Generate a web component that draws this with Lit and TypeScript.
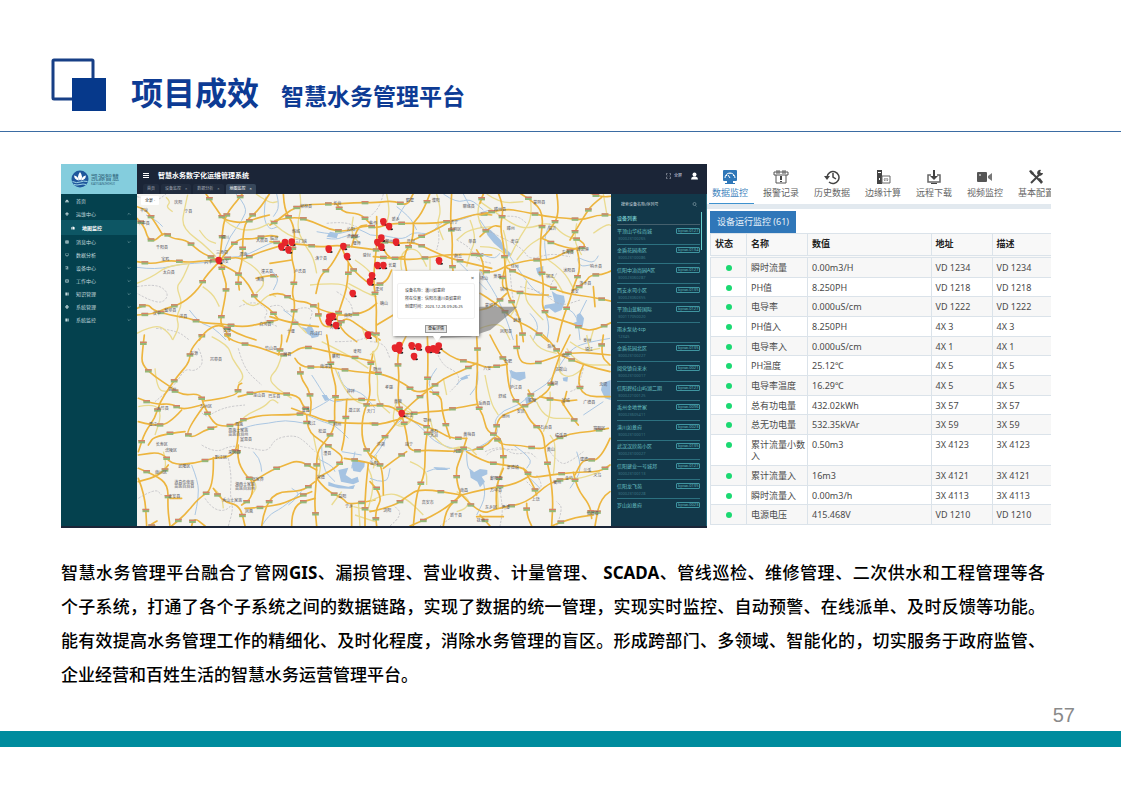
import { LitElement, html, svg, css } from "lit";
import { customElement } from "lit/decorators.js";

const CJK = css`"Noto Sans", "Noto Sans CJK SC", sans-serif`;

interface Tile {
  x: number;
  y: number;
  roads: string[];
  minor: string[];
  rivers: string[];
  lakes: string[];
  borders: string[];
  towns: [number, number, string][];
}

const tiles: Tile[] = [
  {
    x: -243, y: -102,
    roads: [
      "243,175 265,198 275,235 295,245 325,215 345,235 390,240 420,265 440,280 490,302",
      "490,305 497,250 500,210 505,180 520,150 545,120 560,100",
      "490,305 455,300 400,308 340,300 290,312 243,305",
      "490,305 520,265 550,235 590,238 640,225 665,230",
      "490,300 540,290 560,300 600,280 665,260",
      "490,310 530,330 565,355 590,395 600,420 640,445 665,475",
      "495,310 500,340 512,370 508,410 500,450 492,490 510,510 520,540",
      "485,310 450,345 430,385 380,430 330,445 290,462 243,465",
      "243,445 275,430 290,450 340,465 400,475 440,490 490,490 560,502 620,490 665,480",
      "640,102 610,150 570,180 560,230 560,300 545,350 550,390",
      "450,102 470,130 490,160 505,180 560,190 600,175 640,165",
      "320,225 300,190 270,150 243,140",
      "430,540 445,515 490,490 540,520 600,540", "600,355 640,345 665,350",
    ],
    minor: [
      "395,104 385,150 378,190 400,222 440,250 480,290", "330,112 345,125 330,140 350,155",
      "400,310 380,360 360,380 380,430 360,470 370,500 350,540", "440,380 470,400 490,440",
      "430,210 450,240 480,250", "560,300 600,320 630,370 600,400", "243,370 290,350 330,320 400,310",
      "560,420 590,450 640,400 660,410", "505,180 540,210 600,210 640,190", "243,520 300,490 340,520 350,540",
      "600,102 640,130 665,125",
    ],
    rivers: [
      "243,322 300,330 380,310 450,310 500,290 560,292 640,250 665,245", "540,102 575,140 560,180 520,230 500,290",
      "630,110 620,170 640,210 665,200", "400,450 430,490 470,500 510,540", "270,165 300,180 320,200",
    ],
    lakes: [],
    borders: [
      "243,110 300,125 330,102", "243,380 300,370 340,400 320,430 280,420 243,400", "550,440 590,420 640,450 620,480 665,500",
      "300,505 360,510 400,540",
    ],
    towns: [
      [355, 132, "庆阳"], [385, 160, "宁县"], [252, 155, "平凉"], [495, 236, "铜川"], [600, 246, "大荔县"],
      [245, 195, "华亭县"], [300, 268, "千阳县"], [316, 304, "宝鸡"], [445, 312, "兴平"], [494, 308, "西安"],
      [320, 342, "太白县"], [550, 288, "渭南"], [600, 364, "洛南"], [615, 338, "潼关县"], [325, 455, "留坝县"],
      [290, 466, "汉中"], [370, 474, "洋县"], [500, 515, "安康"], [610, 498, "白河县"], [480, 282, "三原县"],
    ],
  },
  {
    x: 399, y: -102,
    roads: [
      "0,195 25,180 60,150 100,135 150,132 200,132 250,128 320,128 370,122 412,138 430,100",
      "40,100 42,150 70,190 75,240 62,290 78,340 65,400 75,425 70,480 50,545",
      "0,245 40,250 100,253 150,262 200,255 260,262 320,270",
      "15,182 70,168 130,185 180,210 230,215 290,195 320,205 360,190 430,190 500,190 560,180 620,160 665,165",
      "200,132 215,158 270,160 300,190",
      "320,170 322,240 315,300 310,370 320,430 318,500 320,545",
      "320,240 370,252 430,245 480,270 540,295 600,310 665,325",
      "215,260 232,310 270,350 310,380 350,365 365,330",
      "310,290 370,295 430,300 500,288 560,282 665,285",
      "430,190 432,240 400,280 410,335", "480,100 462,150 430,190", "545,100 540,180 548,240 545,300 550,340",
      "430,240 480,218 540,185", "330,240 350,300 400,290", "235,310 235,370 212,440 200,475",
      "0,405 30,395 75,425 110,425 150,450 225,470 290,455 320,430", "145,430 145,500 200,500 228,470 270,500 330,540",
      "0,470 50,485 100,495 145,500", "200,475 212,510 260,545", "215,260 185,320 150,345 138,400",
      "620,270 640,300 640,345", "320,495 370,465", "245,260 260,200 290,195", "0,310 65,300",
    ],
    minor: [
      "90,102 95,140 80,200 100,250 130,290 140,340", "0,180 40,220 100,240", "120,375 180,370 230,375 250,400",
      "350,102 360,150 350,190", "255,300 300,330 310,360", "250,170 240,220 270,250", "395,330 385,280 440,260 470,320",
      "480,290 480,330", "600,180 620,230 600,280 590,320", "640,102 620,140 630,200 665,230", "500,102 515,150 500,190 520,240",
      "235,370 290,400 320,410", "70,480 110,520", "275,500 290,540", "665,200 600,205 560,240",
    ],
    rivers: [
      "140,215 190,225 230,215 270,205 300,228 340,225 400,240 430,215 480,225 520,180 560,185 610,165 660,150",
      "380,140 420,170 440,210", "520,102 560,130 600,115 640,150", "170,235 200,240 230,225 270,230", "0,330 30,350 10,390",
      "40,450 70,470 90,500", "580,102 600,140", "20,102 30,140 10,170", "570,310 610,350 650,390", "430,102 400,140 380,180",
    ],
    lakes: ["90,500 110,505 120,490 132,512 125,530 110,520 105,510", "120,520 150,515 145,530 125,535", "180,215 205,220 200,235 170,230"],
    borders: [
      "0,440 30,430 50,460 100,440 130,450 120,480", "170,190 220,185 260,200", "560,240 600,260 620,300 665,310",
      "340,102 330,140 300,170", "500,190 510,230 500,270", "200,395 240,420 250,460",
    ],
    towns: [
      [90, 143, "柳林县"], [190, 134, "长治"], [66, 218, "韩城"], [75, 250, "三门峡"], [230, 233, "济源区"], [248, 256, "偃师"],
      [135, 300, "洛宁县"], [72, 340, "卢氏县"], [355, 320, "长葛"], [365, 184, "新乡"], [408, 127, "鹤壁"], [298, 194, "焦作"],
      [410, 249, "开封"], [538, 214, "东明区"], [552, 295, "商丘"], [595, 248, "单县"], [578, 145, "聊城县"], [278, 291, "登封"],
      [315, 393, "漯河"], [330, 436, "确山"], [222, 472, "南阳"], [180, 507, "邓州"], [50, 518, "十堰"], [120, 526, "丹江口"],
      [485, 125, "濮阳"], [345, 250, "郑州"], [0, 240, "临汾"], [540, 192, "济宁"], [230, 213, "沁阳"],
    ],
  },
  {
    x: 1029, y: -102,
    roads: [
      "0,165 70,145 130,155 200,170 260,175 310,180 350,165 400,165", "55,100 72,140 60,200 72,260 75,320 80,400 110,450 125,500 130,545",
      "120,100 170,130 190,170 182,230 180,300 192,380 185,440 205,470", "230,100 240,160 210,210 185,235",
      "330,100 365,112 400,108", "365,112 335,135 315,165 300,190 270,240",
      "75,320 120,345 190,370 250,400 330,410 400,425", "75,320 40,340 0,330", "75,325 60,380 90,390 150,405 205,405",
      "75,320 130,300 210,300 250,280 290,265", "185,235 240,260 295,268 318,258 300,240 280,235",
      "290,265 305,320 280,380 270,420 250,470 232,545", "280,390 315,370 330,345 365,345 400,330", "0,400 50,430 100,480 150,500 205,545",
      "80,400 40,440 0,450", "205,470 280,490 310,510 345,510 400,485", "0,230 35,195 62,200", "340,380 345,440", "10,102 0,130",
    ],
    minor: [
      "0,125 50,160 110,200 150,205 210,185 250,225 280,235", "20,102 60,130 130,125", "150,110 160,170 120,230 90,290",
      "0,260 60,260 90,310", "110,300 140,260 180,235", "140,360 130,410 160,450 190,480", "205,300 250,330 280,385", "340,220 380,190 400,200",
      "120,400 110,440 90,470", "290,190 280,240 305,285", "340,510 330,545", "0,505 60,480 90,540", "70,210 85,260 75,320",
      "250,400 225,350 190,340", "370,102 380,160",
    ],
    rivers: [
      "20,210 0,180", "90,290 110,320 130,350 170,400 215,410", "0,330 40,390 70,450 100,540", "355,287 345,310 310,300 290,290 300,320 330,315",
      "210,190 190,230 200,300", "190,440 210,490 200,540", "245,440 290,450 300,540", "0,280 40,300 60,280", "320,420 300,460",
      "150,460 180,490 160,540",
    ],
    lakes: [
      "15,203 32,210 62,240 72,262 95,283 86,290 68,272 42,250 22,225", "215,393 230,403 252,407 255,425 245,450 225,458 208,445 190,447 195,435 225,430",
      "168,325 190,318 190,342 180,350 172,340", "290,465 300,458 312,475 308,500 292,505 278,490 290,485",
    ],
    borders: [
      "0,200 60,230 100,250 130,270 150,300 210,280 270,290", "90,330 95,400 110,470", "230,340 210,380", "60,170 110,165 140,190",
      "120,380 180,390 240,440 300,420",
    ],
    towns: [
      [160, 133, "蒙阴县"], [42, 152, "滕州县"], [80, 210, "滕州"], [92, 248, "枣庄"], [205, 211, "临沂"], [92, 324, "徐州"],
      [245, 282, "东海县"], [290, 272, "连云港"], [330, 324, "响水县"], [250, 335, "沭阳县"], [298, 376, "涟水县"],
      [60, 394, "宿州"], [272, 398, "淮安"], [198, 353, "宿迁"], [100, 485, "蚌埠"], [0, 360, "砀山"], [60, 520, "凤阳县"],
      [40, 355, "萧县"], [15, 440, "蒙城县"],
    ],
  },
  {
    x: -6, y: 423,
    roads: [
      "28,0 22,50 20,90 60,125 105,155", "205,0 165,40 165,80 130,120 105,155 75,200 60,250 30,290 10,350",
      "105,155 135,182 195,175 205,205", "205,198 310,185 308,150 320,145", "310,185 380,165 420,175 490,180 505,215 520,225",
      "270,0 290,20 370,35 430,60 462,60 500,35 540,40 600,55 720,80", "430,60 440,30 440,0", "480,70 495,98 560,95 600,100 660,110 720,115",
      "495,98 497,130 520,160 530,200 525,240", "575,0 585,60 590,110 605,160 598,210 600,280 570,320 545,350 545,430 538,500 545,573",
      "10,190 60,210 110,205 140,225 200,210", "140,225 100,270 50,270 10,260", "205,205 230,265 270,275 300,268",
      "205,215 150,290 170,310 210,285 245,275", "300,268 350,240 470,240 520,235 560,255 620,265 720,265",
      "310,265 310,330 290,365 240,368 180,385 110,390 80,350 10,360", "310,330 305,370 330,420 355,440 350,490 320,510",
      "235,368 237,460 190,490 150,540 110,573", "515,240 515,285 560,320 600,345 628,370 600,400 545,430",
      "355,440 400,410 450,390 490,375 545,405", "10,400 60,420 100,450 98,520 105,573", "10,430 30,480 35,573",
      "628,370 690,380 720,390", "700,385 690,470 690,573", "715,50 700,120 708,180 682,240 680,320 710,370",
      "600,195 640,192 720,195", "635,195 630,300 620,345", "545,430 570,465 625,490 640,510 720,495", "330,520 420,515 480,490 530,470",
      "380,573 385,530 420,470 500,470 540,440", "235,460 260,500 315,510 330,573", "470,573 470,510 540,490", "60,573 40,573 66,558",
      "650,510 650,573", "150,290 60,300 40,330", "105,490 140,490", "170,573 175,545 210,573", "470,220 510,235", "100,390 80,420 10,440",
    ],
    minor: [
      "230,5 280,30 290,70 320,110 325,130 310,145", "440,60 430,100 400,130 425,160 470,190", "60,100 65,165 100,170",
      "310,265 330,240 390,215 410,190 430,205", "560,20 640,60 700,100", "600,100 620,150 660,200 700,210", "10,215 60,205 80,240 60,300",
      "655,515 720,530", "660,540 720,560", "670,500 675,573", "85,350 100,400 60,420", "235,460 260,480 265,520", "545,350 560,380 550,430",
      "535,300 545,350", "700,400 720,440 700,520", "620,470 590,510", "345,425 370,450 350,480",
    ],
    rivers: [
      "310,285 350,270 400,265 450,255 510,265", "530,120 550,150 570,185 600,205 640,190", "520,230 560,210 590,190", "355,350 375,370 380,410",
      "170,390 190,440 190,490 180,540", "560,330 560,400 600,440", "545,370 590,390 600,410", "610,110 620,160 680,170 720,220",
      "380,573 400,540 440,520 500,470", "515,240 560,260 600,270 640,310", "660,350 650,400", "460,510 500,480 470,460", "620,350 680,360",
    ],
    lakes: [
      "655,375 690,378 688,395 676,412 655,408 650,392", "610,405 640,398 632,420 650,432 668,425 672,440 655,448 618,440", "580,440 600,448 640,455 660,450 655,462 610,460 580,452",
      "560,180 575,180 582,195 570,198",
    ],
    borders: [
      "190,40 210,80 180,110 150,100 120,150 60,200", "310,40 325,100 380,150", "195,225 210,250 240,230 280,215 330,210", "200,330 240,355 290,330 350,340 400,350 420,310 480,300 510,320 540,350",
      "280,370 290,420 285,480 295,520 280,573", "210,490 230,520 270,530 300,500", "10,490 60,460 80,480", "600,20 660,20 700,5",
    ],
    towns: [
      [225, 79, "岚皋县"], [165, 60, "万源"], [100, 168, "达州"], [195, 218, "万州区"], [355, 187, "巫山县"], [400, 190, "巴东县"],
      [390, 45, "竹山县"], [445, 64, "房县"], [590, 70, "襄阳"], [655, 55, "枣阳"], [555, 99, "南漳县"], [635, 173, "钟祥"],
      [500, 232, "宜昌"], [518, 271, "枝江"], [300, 272, "恩施"], [280, 290, "恩施土家族"], [280, 304, "苗族自治州"], [315, 318, "宣恩县"],
      [595, 274, "荆州"], [550, 295, "松滋"], [640, 230, "潜江区"], [695, 235, "天门"], [280, 356, "来凤县"], [240, 372, "黔江区"],
      [565, 360, "澧县"], [130, 398, "武隆区"], [90, 352, "涪陵区"], [60, 416, "南川区"], [118, 446, "道真仡佬族"], [118, 460, "苗族自治县"],
      [300, 452, "湘西土家族"], [300, 466, "苗族自治州"], [350, 438, "张家界"], [545, 433, "常德"], [262, 500, "秀山土家族"], [100, 490, "正安县"],
      [610, 488, "益阳"], [630, 520, "宁乡"], [330, 535, "凤凰"], [62, 333, "长寿区"], [65, 225, "大竹县"], [42, 274, "垫江"],
    ],
  },
  {
    x: 699, y: 423,
    roads: [
      "95,240 82,200 88,120 80,60 110,0", "172,0 175,90 170,170 178,260 165,330 165,420 140,470 130,573", "0,110 50,120 110,150 130,170 170,170 220,130 270,110 320,85",
      "200,30 240,70 320,85 350,100 410,88", "320,0 325,85 315,200 340,240 350,290 390,305 400,340 400,390", "360,0 385,50 412,88",
      "440,0 440,75 480,90 530,75 570,60", "410,88 415,180 460,215 480,260 520,290 525,350 540,420", "570,60 620,50 720,60", "570,60 600,0",
      "570,60 640,90 720,110", "570,60 545,130 540,165 490,200 440,225 385,245 375,300", "570,60 550,30 520,0", "640,90 620,130 640,185 720,185",
      "0,212 60,208 95,240 170,230 215,228 280,215 320,208", "95,240 60,290 30,320 0,360", "95,240 110,290 115,350 170,345 260,350 275,345",
      "95,240 140,265 200,285 240,310 290,310", "180,170 215,180 215,228 240,310", "95,250 30,270 0,265", "290,310 272,370 258,400 262,450 275,480 230,520 220,573",
      "290,350 340,380 400,390 470,400 478,430 540,420 610,412 690,410 720,390", "310,345 350,335 375,300 390,330 450,330 520,345 540,320 600,295 660,290 715,280",
      "275,480 350,460 430,450 475,425", "275,480 330,540 380,520 470,505 540,440 600,430", "380,520 375,460 400,400", "0,440 40,480 15,530 20,573",
      "0,530 70,515 110,485 150,460 275,480", "120,573 200,540 275,480", "540,420 550,480 545,573", "610,412 620,460 660,510 665,550", "720,470 690,490 675,573",
      "545,573 600,550 670,540", "575,200 600,240 625,270", "510,185 570,200 620,195", "40,480 40,410 20,370 0,360", "470,505 470,540 485,573",
      "720,310 690,380 640,370 615,420", "475,165 490,195", "90,240 130,200 170,170", "110,350 80,370 40,400", "460,400 490,450 500,480", "700,0 690,60 720,90",
      "320,545 400,545", "360,573 330,540", "590,170 580,210",
    ],
    minor: [
      "10,50 25,120 20,200 60,235", "0,60 30,40 20,0", "480,0 500,40 560,55", "540,170 545,230 520,290", "345,120 360,200 385,240", "250,340 290,330 320,360",
      "120,380 170,400 170,450", "600,20 640,50 690,40", "570,70 560,110 600,130 640,100", "80,200 60,260 100,280 140,240 90,200",
      "180,290 220,340 270,340", "20,360 10,400", "550,420 560,330 540,300", "0,500 50,470 110,490 160,540", "260,470 300,490 290,520 260,530",
      "80,230 120,220 125,260 85,268", "400,390 380,440 385,520", "650,0 660,50", "690,410 640,430 600,430", "500,200 520,250 600,250", "180,250 190,290",
      "220,130 230,180", "590,40 620,90 720,90",
    ],
    rivers: [
      "100,250 60,280 40,330 0,380", "100,240 150,270 190,320 260,345 300,350 350,325 388,292 370,260 400,225 450,210 490,170 530,150 560,105 600,45 640,25 720,10",
      "290,355 290,400 310,410", "320,90 330,140 300,180", "200,100 170,140 190,170", "0,430 50,450 60,400", "170,410 190,400 240,400", "430,330 490,370 470,400",
      "420,160 425,105", "620,350 640,400 600,460", "340,440 350,480 320,540", "640,240 700,200", "260,150 280,125 300,120", "480,430 510,460",
    ],
    lakes: [
      "418,105 438,112 465,110 467,130 448,138 425,128", "298,400 312,412 330,402 352,405 352,418 335,425 345,440 330,457 322,440 302,428", "697,145 722,135 722,195 705,190 693,165",
      "578,128 594,125 592,140 580,138", "190,396 225,398 235,405 200,405", "465,190 480,180 485,205 470,212", "270,130 290,120 295,130 275,136",
    ],
    borders: [
      "200,50 215,90 260,110 270,140 240,170", "345,350 390,330 430,360 480,350 500,370", "540,350 570,390 600,380 640,350", "500,420 520,450 500,470 470,440", "60,573 100,540 70,510",
      "390,470 400,520 390,573", "560,573 580,520 560,500", "640,100 625,160 600,170", "240,550 210,573", "0,20 40,20 60,70", "350,360 370,340 440,345",
    ],
    towns: [
      [402, 84, "合肥"], [340, 104, "六安"], [420, 162, "庐江县"], [575, 66, "南京"], [532, 40, "滁州"], [555, 108, "马鞍山"], [640, 22, "泰州"],
      [645, 48, "镇江"], [688, 153, "无锡"], [540, 150, "芜湖"], [475, 200, "铜陵"], [575, 200, "宣城"], [325, 210, "岳西县"], [280, 304, "黄梅县"],
      [105, 245, "武汉"], [160, 260, "鄂州"], [180, 293, "黄石"], [180, 306, "大冶"], [105, 333, "咸宁"], [250, 355, "九江"], [510, 282, "石台县"],
      [555, 305, "绩溪县"], [530, 348, "黄山"], [410, 403, "景德镇"], [360, 435, "鄱阳县"], [360, 470, "万年县"], [270, 472, "南昌"], [155, 506, "高安市"],
      [395, 522, "鹰潭"], [485, 498, "上饶"], [550, 446, "衢州"], [630, 378, "建德"], [640, 410, "兰溪"], [585, 436, "金华"], [670, 426, "义乌"],
      [650, 540, "仙居县"], [240, 545, "新干县"], [320, 560, "抚州"], [45, 162, "孝感"], [10, 108, "随州"], [72, 203, "黄陂"], [395, 250, "池州"],
      [440, 234, "安庆"], [385, 190, "舒城"], [640, 206, "广德县"], [670, 285, "富阳区"], [0, 390, "岳阳"], [20, 333, "洪湖"], [40, 530, "浏阳"], [345, 522, "东乡区"],
    ],
  },
];

const pins: [number, number][] = [
  [739, 84], [756, 98], [733, 133], [721, 146], [733, 160], [777, 145], [619, 158], [630, 188], [575, 166],
  [444, 146], [464, 145], [433, 159], [454, 168], [906, 201], [721, 215], [739, 215], [705, 246], [699, 264],
  [647, 299], [577, 370], [587, 368], [575, 384], [597, 395], [693, 424], [245, 200], [774, 463], [787, 455],
  [787, 468], [824, 456], [844, 459], [831, 488], [874, 467], [889, 465], [905, 457], [899, 468], [794, 659],
];

const parse = (line: string) => line.split(" ").map((p) => p.split(",").map(Number));

function curve(line: string): string {
  const p = parse(line);
  let d = `M${p[0][0]} ${p[0][1]}`;
  for (let i = 1; i < p.length - 1; i++) {
    const mx = (p[i][0] + p[i + 1][0]) / 2;
    const my = (p[i][1] + p[i + 1][1]) / 2;
    d += `Q${p[i][0]} ${p[i][1]} ${mx} ${my}`;
  }
  const e = p[p.length - 1];
  return d + `L${e[0]} ${e[1]}`;
}

const shields = (line: string, n: number) =>
  parse(line).slice(1).map((b, i, a) => {
    const prev = i ? a[i - 1] : parse(line)[0];
    return [(b[0] + prev[0]) / 2, (b[1] + prev[1]) / 2];
  }).filter((_, i) => (i + n) % 2 === 0);

@customElement("region-map")
class RegionMap extends LitElement {
  static styles = css`
    :host { display: block; position: relative; overflow: hidden; background: #f4f3ef; font-family: ${CJK}; }
    .chart { position: absolute; inset: 0; width: 100%; height: 100%; display: block; }
    .road { fill: none; stroke: #edb53e; stroke-width: 5; stroke-linejoin: round; stroke-linecap: round; }
    .minor { fill: none; stroke: #eadb90; stroke-width: 4; stroke-linejoin: round; }
    .river { fill: none; stroke: #abc7e3; stroke-width: 3; stroke-linejoin: round; }
    .lake { fill: #a5c3e2; }
    .border { fill: none; stroke: #b4b4ba; stroke-width: 2; stroke-dasharray: 7 4; }
    .shield { fill: #94b878; }
    .cap { fill: #d98068; }
    .town { font-size: 12px; fill: #55555c; }
    .pin { fill: #e6252b; }
    .dot { fill: #222; }
    .cast { fill: #6e6e6e; opacity: .6; }
    .scope { position: absolute; left: 4px; top: 2px; padding: 0 4px; height: 9px; border: 0; background: #fff; color: #222; font: 4px/9px ${CJK}; border-radius: 1px; }
    .card { position: absolute; left: 54%; top: 23.3%; width: 86px; background: #fff; box-shadow: 1px 1px 3px #777; padding: 4px 4px 3px; box-sizing: border-box; text-align: center; font: 4px/8px ${CJK}; color: #333; }
    .card::after { content: ""; position: absolute; left: 40px; top: 100%; border: 4px solid transparent; border-top: 6px solid #fff; border-bottom: 0; }
    .shut { display: block; margin-left: auto; border: 0; background: none; padding: 0; width: 5px; height: 6px; font: 6px/4px ${CJK}; color: #555; }
    .facts { margin: 2px 0 6px; padding: 3px 7px 7px; border: 1px solid #f1f1f1; border-radius: 2px; text-align: left; white-space: nowrap; }
    .fact { margin: 0; }
    .more { display: block; margin: 0 auto; border: 1px solid #999; background: #e4e4e4; color: #222; padding: 0 2px; font: 4px/6px ${CJK}; }
  `;

  render() {
    return html`
      <svg class="chart" viewBox="0 0 1422 996" preserveAspectRatio="xMidYMid slice" aria-label="地图">
        ${tiles.map((t) => svg`<g transform="translate(${t.x} ${t.y})">
          ${t.lakes.map((l) => svg`<polygon class="lake" points=${l}></polygon>`)}
          ${t.rivers.map((l) => svg`<path class="river" d=${curve(l)}></path>`)}
          ${t.borders.map((l) => svg`<path class="border" d=${curve(l)}></path>`)}
          ${t.minor.map((l) => svg`<path class="minor" d=${curve(l)}></path>`)}
          ${t.roads.map((l) => svg`<path class="road" d=${curve(l)}></path>`)}
          ${t.roads.map((l, n) => shields(l, n).map(([x, y]) => svg`
            <rect class="shield" x=${x - 10} y=${y - 5} width="20" height="10"></rect>
            <rect class="cap" x=${x - 10} y=${y - 5} width="20" height="4"></rect>`))}
          ${t.towns.map(([x, y, name]) => svg`<text class="town" x=${x} y=${y}>${name}</text>`)}
        </g>`)}
        <polygon class="cast" points="1029,338 1141,338 1115,362 1060,408 1000,428 900,432"></polygon>
        ${pins.map(([x, y]) => svg`<g>
          <ellipse class="dot" cx=${x + 7} cy=${y + 8} rx="5" ry="3"></ellipse>
          <path class="pin" d="M${x - 10} ${y - 2}a10 10 0 0 1 20 0q0 8 -6 13h-7q-7 -5 -7 -13z"></path></g>`)}
      </svg>
      <button class="scope">全景 ·</button>
      <div class="card">
        <button class="shut" aria-label="关闭">×</button>
        <div class="facts">
          <p class="fact">设备名称：潢川如意府</p>
          <p class="fact">所在位置：信阳市潢川县如意府</p>
          <p class="fact">创建时间：2023-12-26 09:26:25</p>
        </div>
        <button class="more">查看详情</button>
      </div>`;
  }
}

const menu: [string, string, string][] = [
  ["M1 5l4-4 4 4v4H6V6H4v3H1z", "首页", ""],
  ["M4 0h2v3l3 0v3H6v4H4V6H1V3h3z", "运维中心", "up"],
  ["M1 3l3-2v8H1zM5 1l4 2v6H5z", "地图监控", "sub"],
  ["M1 1h8v8H1zM4 3v4h2V3z", "消息中心", "down"],
  ["M1 1h8v5H1zM2 2v3h6V2zM3 8h4v1H3z", "数据分析", ""],
  ["M1 1h7v8H6V3H1zM2 5h2v4H2z", "设备中心", "down"],
  ["M1 1h8v8H1zM3 3v4h4V3z", "工作中心", "down"],
  ["M1 1h5v8H1zM7 1h2v8H7z", "知识管理", "down"],
  ["M4 0h2l1 2 2 1v3L7 8 5 10 3 8 1 6V3l2-1zM4 4v2h2V4z", "系统管理", "down"],
  ["M1 1h4v8H1zM6 1h3v8H6z", "系统监控", "down"],
];

const devices: [string, string, string][] = [
  ["平顶山华桂尚城", "300023100265", "bpsw-0127"], ["金盾花园南区", "300023100086", "bpsw-0134"],
  ["信阳中冶尚园A区", "300023060287", "bpsw-0127"], ["西安水司小区", "300023060355", "bpsw-0135"],
  ["平顶山蓝鲸国际", "300117050020", "bpsw-0127"], ["雨水泵站-tcp", "12345", ""],
  ["金盾花园北区", "300023100227", "bpsw-0135"], ["阅党镇自来水", "300023100017", "bpsw-0021"],
  ["信阳碧桂山屿湖二期", "300022100125", "bpsw-0127"], ["禹州金地世家", "300023605411", "bpsw-0096"],
  ["潢川如意府", "300023100011", "bpsw-0023"], ["武汉汉欣苑小区", "300023100027", "bpsw-0135"],
  ["信阳建业一号城邦", "300023100113", "bpsw-0127"], ["信阳龙飞苑", "300023100228", "bpsw-0135"],
  ["罗山如意府", "", "bpsw-0023"],
];

@customElement("water-dashboard")
class WaterDashboard extends LitElement {
  static styles = css`
    :host { display: grid; grid-template-columns: 76px minmax(0, 1fr); background: #1b2537; font-family: ${CJK}; overflow: hidden; }
    .side { background: #04414e; color: #c3dade; font-size: 5px; border-bottom: 2px solid #1b2537; }
    .brand { height: 30px; background: #84cddd; display: flex; align-items: center; gap: 2px; padding-left: 10px; box-sizing: border-box; color: #3b7189; }
    .brand-mark { width: 18px; height: 18px; }
    .brand-text { font-weight: 500; font-size: 7px; line-height: 9px; }
    .brand-sub { display: block; font-size: 3px; line-height: 4px; }
    .item { display: grid; grid-template-columns: 4px 1fr 5px; gap: 7px; height: 13px; align-items: center; padding: 0 5px 0 4px; color: inherit; text-decoration: none; }
    .item.sub { height: 15px; background: #0d5664; padding-left: 10px; color: #fff; font-weight: 700; }
    .glyph { width: 4px; height: 4px; fill: currentColor; }
    .chev { width: 4px; height: 4px; fill: none; stroke: #7ba4ab; stroke-width: 1; }
    .main { display: grid; grid-template-rows: 30px minmax(0, 1fr); padding-bottom: 2px; min-width: 0; }
    .top { display: grid; grid-template-rows: 20px 10px; color: #fff; }
    .bar { display: flex; align-items: center; padding: 3px 9px 0 6px; }
    .burger { width: 6px; height: 6px; margin-right: 9px; fill: #fff; }
    .name { margin: 0; font-size: 7px; line-height: 10px; font-weight: 700; flex: 1; }
    .full { border: 0; padding: 0; background: none; color: #d6dae0; display: flex; align-items: center; gap: 3px; font: 4px/6px ${CJK}; margin-right: 9px; }
    .corner { width: 5px; height: 6px; fill: none; stroke: currentColor; }
    .user { width: 7px; height: 8px; fill: #fff; }
    .tabs { display: flex; padding-left: 6px; gap: 2px; }
    .tab { border: 0; background: #222d3f; color: #a6adb8; font: 4px/10px ${CJK}; padding: 0 4px; border-radius: 2px 2px 0 0; white-space: nowrap; }
    .tab.on { background: #37475a; color: #fff; }
    .body { display: grid; grid-template-columns: minmax(0, 1fr) 96px; min-height: 0; }
    .devices { background: #12384a; padding: 4px 6px 7px 6px; border-right: 1px solid #24667a; display: flex; flex-direction: column; min-height: 0; position: relative; }
    .search { display: flex; align-items: center; height: 13px; padding: 0 3px 0 4px; }
    .box { flex: 1; min-width: 0; border: 0; padding: 0; background: none; color: #cdd9de; font: 4px/8px ${CJK}; height: 10px; }
    .box::placeholder { color: #cdd9de; opacity: 1; }
    .lens { width: 5px; height: 5px; fill: none; stroke: #a5bac3; }
    .head { margin: 0; height: 14px; font-size: 5px; line-height: 15px; font-weight: 500; color: #7cd0d2; border-bottom: 1px solid #45606d; box-sizing: border-box; }
    .list { list-style: none; margin: 0; padding: 0; flex: 1; display: grid; grid-auto-rows: minmax(0, 1fr); min-height: 0; }
    .device { display: grid; grid-template-columns: 1fr auto; align-content: center; align-items: center; border-bottom: 1px solid #2c7180; color: #6cc2c5; font-size: 5px; line-height: 8px; white-space: nowrap; }
    .device:last-child { border: 0; align-content: start; padding-top: 2px; }
    .code { grid-column: 1; font-size: 4px; line-height: 7px; color: #3e7683; padding-left: 1px; }
    .tag { border: 1px solid #3f95a0; border-radius: 1px; font: 4px/4px ${CJK}; padding: 0 1px; color: #64b9be; width: 20px; text-align: center; }
    .thumb { position: absolute; right: 4px; top: 18px; width: 1px; height: 38px; background: #6ad0cf; }
  `;

  render() {
    return html`
      <nav class="side">
        <div class="brand">
          <svg class="brand-mark" viewBox="0 0 36 36"><circle cx="18" cy="18" r="17" fill="#1f579c"></circle>
            <path d="M18 21Q10 14 18 4q8 10 0 17zM16 21Q7 20 6 11q8 1 10 10zM20 21q2-9 10-10-1 9-10 10z" fill="#fff"></path>
            <path d="M3 23q8 4 15 1t15-1M6 29q6 2 12 0t12 0" fill="none" stroke="#9cd4e6" stroke-width="2"></path></svg>
          <span class="brand-text">凯源智慧<span class="brand-sub">KAIYUANZHIHUI</span></span>
        </div>
        ${menu.map(([d, label, kind]) => html`<a class="item ${kind}" href="#">
          <svg class="glyph" viewBox="0 0 10 10"><path d=${d} fill-rule="evenodd"></path></svg><span>${label}</span>
          ${kind === "up" || kind === "down"
            ? html`<svg class="chev" viewBox="0 0 6 6"><path d=${kind === "up" ? "M1 4l2-2 2 2" : "M1 2l2 2 2-2"}></path></svg>` : ""}
        </a>`)}
      </nav>
      <div class="main">
        <header class="top">
          <div class="bar">
            <svg class="burger" viewBox="0 0 6 6"><path d="M0 0h6v1H0zM0 2h6v1H0zM0 4h6v1H0z"></path></svg>
            <h2 class="name">智慧水务数字化运维管理系统</h2>
            <button class="full"><svg class="corner" viewBox="0 0 10 12"><path d="M1 4V1h2M7 1h2v3M9 8v3H7M3 11H1V8M1 6h2M7 6h2"></path></svg>全屏</button>
            <svg class="user" viewBox="0 0 14 16"><circle cx="7" cy="5" r="4"></circle><path d="M0 15q0-5 5-6h4q5 1 5 6z"></path></svg>
          </div>
          <div class="tabs">
            <button class="tab">首页</button><button class="tab">设备监控　×</button>
            <button class="tab">数据分析　×</button><button class="tab on">地图监控　×</button>
          </div>
        </header>
        <div class="body">
          <region-map></region-map>
          <aside class="devices">
            <label class="search"><input class="box" placeholder="搜索设备名称/序列号" aria-label="搜索设备" />
              <svg class="lens" viewBox="0 0 10 10"><circle cx="5" cy="4" r="3"></circle><path d="M7 7l2 2"></path></svg></label>
            <h3 class="head">设备列表</h3>
            <ul class="list">
              ${devices.map(([name, code, tag]) => html`<li class="device"><span>${name}</span>
                ${tag ? html`<span class="tag">${tag}</span>` : html`<span></span>`}
                <span class="code">${code}</span></li>`)}
            </ul>
            <span class="thumb"></span>
          </aside>
        </div>
      </div>`;
  }
}

const tools = [
  { label: "数据监控", art: svg`<rect x="1" y="1" width="14" height="11" rx="1" fill="#2f77b8"></rect><path d="M3 9a5 5 0 0 1 10 0M8 9L6 6M4 6l1 1M12 6l-1 1M8 4v1" fill="none" stroke="#fff"></path><path d="M5 12h6v2h2v1H3v-1h2z" fill="#2f77b8"></path>` },
  { label: "报警记录", art: svg`<path d="M1 3h14v3H1zM3 6v8h10V6" fill="none" stroke="#555"></path><path d="M4 1v4M6 1v4M10 1v4M12 1v4" stroke="#555"></path><path d="M8 7v4M8 12v1" stroke="#444" stroke-width="2"></path>` },
  { label: "历史数据", art: svg`<path d="M3 8a6 6 0 1 1 2 5M9 4v4l3 2" fill="none" stroke="#444" stroke-width="1.5"></path><path d="M0 7h6l-3 4z" fill="#444"></path>` },
  { label: "边缘计算", art: svg`<path d="M2 1h5v14H2zM3 3v1h3V3zM4 9v2h1V9z" fill="#444" fill-rule="evenodd"></path><path d="M7 7h8v7H7z" fill="#fff" stroke="#666"></path><path d="M10 9l-1 2 1 1M12 9l1 2-1 1M11 9v3" fill="none" stroke="#666" stroke-width=".7"></path>` },
  { label: "远程下载", art: svg`<path d="M5 6H2v7h12V6h-3" fill="none" stroke="#666" stroke-width="1.5"></path><path d="M7 1h2v6h3l-4 4-4-4h3zM5 14h6v1H5z" fill="#444"></path>` },
  { label: "视频监控", art: svg`<rect x="0" y="3" width="10" height="10" rx="1" fill="#555"></rect><path d="M11 7l4-3v8l-4-3z" fill="#777"></path><path d="M2 6h2" stroke="#fff"></path>` },
  { label: "基本配置", art: svg`<path d="M4 4l9 9" stroke="#444" stroke-width="2"></path><path d="M12 5L3 14" stroke="#444" stroke-width="2"></path><path d="M1 2l2-1 3 3-1 2-2-1zM15 4a3 3 0 0 1-5 2 3 3 0 0 1 3-5l-1 2 1 1z" fill="#444"></path><path d="M10 10l2-1 3 4-2 2z" fill="#444"></path>` },
];

const readings: string[][] = [
  ["瞬时流量", "0.00m3/H", "VD 1234"], ["PH值", "8.250PH", "VD 1218"], ["电导率", "0.000uS/cm", "VD 1222"],
  ["PH值入", "8.250PH", "4X 3"], ["电导率入", "0.000uS/cm", "4X 1"], ["PH温度", "25.12℃", "4X 5"],
  ["电导率温度", "16.29℃", "4X 5"], ["总有功电量", "432.02kWh", "3X 57"], ["总无功电量", "532.35kVAr", "3X 59"],
  ["累计流量小数入", "0.50m3", "3X 4123"], ["累计流量入", "16m3", "3X 4121"], ["瞬时流量入", "0.00m3/h", "3X 4113"],
  ["电源电压", "415.468V", "VD 1210"],
];

@customElement("monitor-panel")
class MonitorPanel extends LitElement {
  static styles = css`
    :host { display: flex; flex-direction: column; overflow: hidden; background: #fff; font: 9px/11px ${CJK}; color: #4a4a4a; }
    .tools { display: flex; height: 40px; border-bottom: 5px solid #e2e9ef; padding-left: 2px; flex: none; }
    .tool { flex: none; width: 51px; border: 0; background: none; padding: 5px 9px 0 0; font: inherit; line-height: 13px; color: #666; display: flex; flex-direction: column; align-items: center; gap: 1px; box-sizing: border-box; white-space: nowrap; position: relative; }
    .tool.on { color: #3d83bd; }
    .tool.on::after { content: ""; position: absolute; left: 0; right: 6px; bottom: 0; height: 1px; background: #3e92cf; }
    .art { width: 16px; height: 16px; flex: none; }
    .gauge { position: absolute; right: 6px; top: 5px; width: 4px; height: 16px; border: 1px solid #aaa; background: linear-gradient(#fff 40%, #e8703a 40%); }
    .sheet { flex: 1; min-height: 0; padding: 2px 0 3px 3px; display: flex; flex-direction: column; }
    .mode { align-self: flex-start; border: 0; background: #3077b9; color: #e8f1f8; font: inherit; line-height: 22px; padding: 0 7px; flex: none; }
    .wrap { flex: 1; min-height: 0; }
    .grid { width: 100%; height: 100%; table-layout: fixed; border-collapse: collapse; }
    .c-state { width: 36px; }
    .c-name, .c-addr { width: 61px; }
    .c-note { width: 59px; }
    .grid th, .grid td { border: 1px solid #dbe3ea; border-right: 0; padding: 4px 0 3px 4px; text-align: left; vertical-align: top; }
    .grid th { color: #222; font-weight: 700; background: #f8f8f8; padding: 4px 0 6px 4px; border-bottom: 3px double #dbe3ea; }
    .grid tbody tr:nth-child(odd) td { background: #f7f7f7; }
    .grid .state { text-align: center; padding-left: 0; }
    .led { display: inline-block; width: 6px; height: 6px; border-radius: 50%; background: #1bd972; }
  `;

  render() {
    return html`
      <div class="tools">
        ${tools.map((t, i) => html`<button class="tool ${i === 0 ? "on" : ""}">
          <svg class="art" viewBox="0 0 16 16">${t.art}</svg>${t.label}${i === 6 ? html`<span class="gauge"></span>` : ""}</button>`)}
      </div>
      <div class="sheet">
        <button class="mode">设备运行监控 (61)</button>
        <div class="wrap">
          <table class="grid">
            <colgroup><col class="c-state" /><col class="c-name" /><col /><col class="c-addr" /><col class="c-note" /></colgroup>
            <thead><tr><th>状态</th><th>名称</th><th>数值</th><th>地址</th><th>描述</th></tr></thead>
            <tbody>
              ${readings.map(([name, value, addr]) => html`<tr>
                <td class="state"><span class="led"></span></td><td>${name}</td><td>${value}</td><td>${addr}</td><td>${addr}</td></tr>`)}
            </tbody>
          </table>
        </div>
      </div>`;
  }
}

@customElement("app-root")
class AppRoot extends LitElement {
  static styles = css`
    :host { display: block; min-height: 100vh; background: #fff; color: #000; font-family: ${CJK}; }
    .title { display: flex; align-items: flex-end; padding: 58px 51px 20px; border-bottom: 1px solid #3b6ca3; }
    .mark { width: 55px; height: 53px; margin-right: 25px; }
    .heading { margin: 0 22px 0 0; font-size: 32px; line-height: 36px; font-weight: 700; color: #0d3b94; }
    .sub { margin: 0; font-size: 23px; line-height: 30px; font-weight: 700; color: #0d3b94; }
    .shots { display: grid; grid-template-columns: 646fr 344fr; margin: 32px 70px 0 61px; aspect-ratio: 990 / 364; }
    .shots > * { min-width: 0; min-height: 0; }
    .copy { margin: 28px 76px 0 61px; font-size: 17px; line-height: 34px; font-weight: 500; }
    .line { display: block; text-align: justify; text-align-last: justify; }
    .line:last-child { text-align-last: left; }
    .latin { font-weight: 700; }
    .page { margin: 11px 46px 0 0; text-align: right; font: 20px/24px "Liberation Sans", sans-serif; color: #8a8a8a; }
    .band { height: 16px; margin-top: 4px; background: #008c9e; }
  `;

  render() {
    return html`
      <header class="title">
        <svg class="mark" viewBox="0 0 55 53" aria-hidden="true">
          <rect x="2" y="2" width="40" height="39" fill="none" stroke="#173f86" stroke-width="3" rx="1"></rect>
          <rect x="21" y="20" width="34" height="33" fill="#06398b"></rect>
        </svg>
        <h1 class="heading">项目成效</h1>
        <p class="sub">智慧水务管理平台</p>
      </header>
      <section class="shots">
        <water-dashboard></water-dashboard>
        <monitor-panel></monitor-panel>
      </section>
      <p class="copy">
        <span class="line">智慧水务管理平台融合了管网<b class="latin">GIS</b>、漏损管理、营业收费、计量管理、 <b class="latin">SCADA</b>、管线巡检、维修管理、二次供水和工程管理等各</span>
        <span class="line">个子系统，打通了各个子系统之间的数据链路，实现了数据的统一管理，实现实时监控、自动预警、在线派单、及时反馈等功能。</span>
        <span class="line">能有效提高水务管理工作的精细化、及时化程度，消除水务管理的盲区。形成跨部门、多领域、智能化的，切实服务于政府监管、</span>
        <span class="line">企业经营和百姓生活的智慧水务运营管理平台。</span>
      </p>
      <footer>
        <p class="page">57</p>
        <div class="band"></div>
      </footer>`;
  }
}
